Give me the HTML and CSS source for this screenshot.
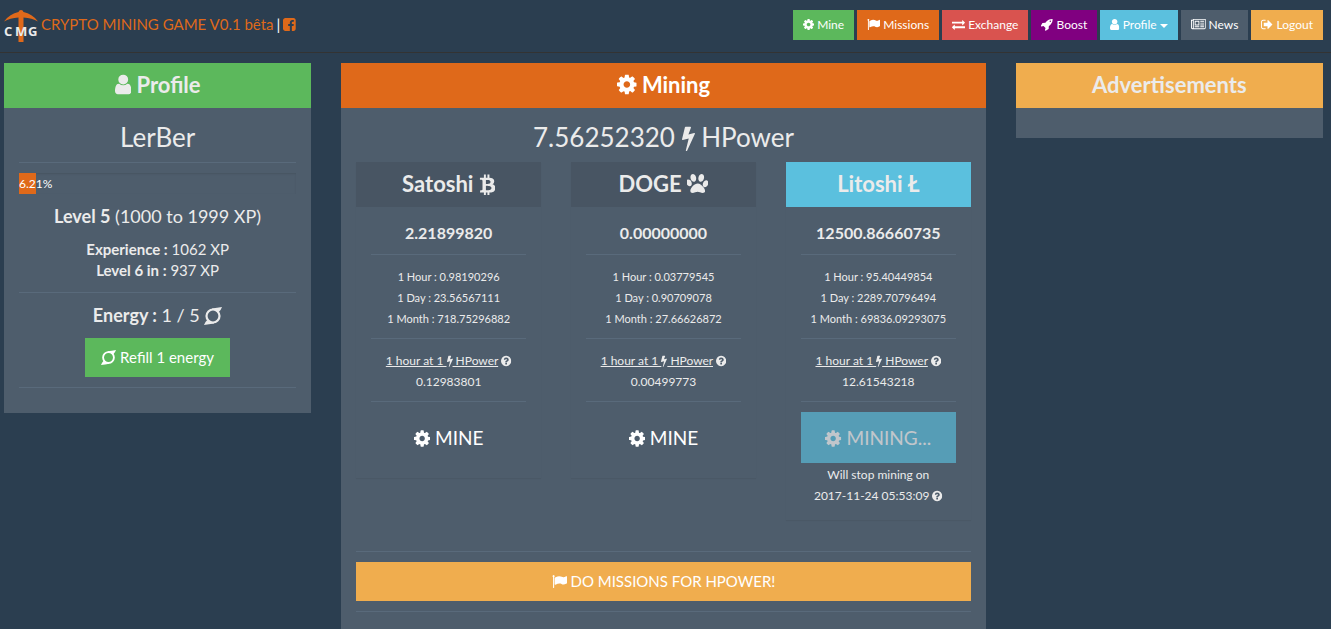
FILE: index.html
```html
<!DOCTYPE html>
<html lang="en">
<head>
<meta charset="utf-8">
<meta name="viewport" content="width=device-width, initial-scale=1">
<title>Crypto Mining Game</title>
<link rel="stylesheet" href="styles.css">
</head>
<body>
<svg class="sprite" aria-hidden="true">
  <symbol id="cog" viewBox="128 0 1536 1792"><path d="M1152 896q0-106-75-181t-181-75-181 75-75 181 75 181 181 75 181-75 75-181zm512-109v222q0 12-8 23t-20 13l-185 28q-19 54-39 91 35 50 107 138 10 12 10 25t-9 23q-27 37-99 108t-94 71q-12 0-26-9l-138-108q-44 23-91 38-16 136-29 186-7 28-36 28h-222q-14 0-24.5-8.5t-11.5-21.5l-28-184q-49-16-90-37l-141 107q-10 9-25 9-14 0-25-11-126-114-165-168-7-10-7-23 0-12 8-23 15-21 51-66.5t54-70.5q-27-50-41-99l-183-27q-13-2-21-12.5t-8-23.5v-222q0-12 8-23t19-13l186-28q14-46 39-92-40-57-107-138-10-12-10-24 0-10 9-23 26-36 98.5-107.5t94.5-71.5q13 0 26 10l138 107q44-23 91-38 16-136 29-186 7-28 36-28h222q14 0 24.5 8.5t11.5 21.5l28 184q49 16 90 37l142-107q9-9 24-9 13 0 25 10 129 119 165 170 7 8 7 22 0 12-8 23-15 21-51 66.5t-54 70.5q26 50 41 98l183 28q13 2 21 12.5t8 23.5z"/></symbol>
  <symbol id="flag" viewBox="0 0 1792 1792"><path d="M320 256q0 72-64 110v1266q0 13-9.500 22.500t-22.500 9.500h-64q-13 0-22.500-9.500t-9.500-22.500v-1266q-64-38-64-110 0-53 37.500-90.500t90.500-37.500 90.500 37.500 37.500 90.500zm1472 64v763q0 25-12.500 38.500t-39.500 27.500q-215 116-369 116-61 0-123.500-22t-108.500-48-115.500-48-142.500-22q-192 0-464 146-17 9-33 9-26 0-45-19t-19-45v-742q0-32 31-55 21-14 79-43 236-120 421-120 107 0 200 29t219 88q38 19 88 19 54 0 117.500-21t110-47 88-47 54.500-21q26 0 45 19t19 45z"/></symbol>
  <symbol id="exchange" viewBox="0 0 1792 1792"><path d="M1792 1184v192q0 13-9.500 22.500t-22.500 9.500h-1376v192q0 13-9.500 22.500t-22.500 9.500q-12 0-24-10l-319-320q-9-9-9-22 0-14 9-23l320-320q9-9 23-9 13 0 22.500 9.500t9.500 22.500v192h1376q13 0 22.500 9.500t9.500 22.500zm0-544q0 14-9 23l-320 320q-9 9-23 9-13 0-22.500-9.500t-9.500-22.500v-192h-1376q-13 0-22.500-9.500t-9.500-22.500v-192q0-13 9.500-22.500t22.500-9.500h1376v-192q0-14 9-23t23-9q12 0 24 10l319 319q9 9 9 23z"/></symbol>
  <symbol id="rocket" viewBox="64 0 1664 1792"><path d="M1440 448q0-40-28-68t-68-28-68 28-28 68 28 68 68 28 68-28 28-68zm224-288q0 249-75.500 430.500t-253.500 360.500q-81 80-195 176l-20 379q-2 16-16 26l-384 224q-7 4-16 4-12 0-23-9l-64-64q-13-14-8-32l85-276-281-281-276 85q-3 1-9 1-14 0-23-9l-64-64q-17-19-5-39l224-384q10-14 26-16l379-20q96-114 176-195 188-187 358-258t431-71q14 0 24 9.500t10 22.500z"/></symbol>
  <symbol id="user" viewBox="256 0 1280 1792"><path d="M1536 1399q0 109-62.500 187t-150.500 78h-854q-88 0-150.500-78t-62.500-187q0-85 8.500-160.500t31.500-152 58.500-131 94-89 134.500-34.500q131 128 313 128t313-128q76 0 134.500 34.500t94 89 58.500 131 31.500 152 8.500 160.500zm-256-887q0 159-112.500 271.500t-271.500 112.500-271.500-112.500-112.500-271.500 112.500-271.500 271.500-112.500 271.500 112.500 112.500 271.500z"/></symbol>
  <symbol id="news" viewBox="0 0 2048 1792"><path d="M1024 512h-384v384h384v-384zm128 640v128h-640v-128h640zm0-768v640h-640v-640h640zm640 768v128h-512v-128h512zm0-256v128h-512v-128h512zm0-256v128h-512v-128h512zm0-256v128h-512v-128h512zm-1536 960v-960h-128v960q0 26 19 45t45 19 45-19 19-45zm1664 0v-1088h-1536v1088q0 33-11 64h1483q26 0 45-19t19-45zm128-1216v1216q0 80-56 136t-136 56h-1664q-80 0-136-56t-56-136v-1088h256v-128h1792z"/></symbol>
  <symbol id="signout" viewBox="64 0 1664 1792"><path d="M704 1440q0 4 1 20t.5 26.500-3 23.500-10 19.500-20.500 6.500h-320q-119 0-203.500-84.500t-84.500-203.500v-704q0-119 84.500-203.500t203.500-84.500h320q13 0 22.500 9.500t9.500 22.500q0 4 1 20t.5 26.500-3 23.500-10 19.500-20.500 6.500h-320q-66 0-113 47t-47 113v704q0 66 47 113t113 47h312l11.500 1 11.500 3 8 5.500 7 9 2 13.500zm928-544q0 26-19 45l-544 544q-19 19-45 19t-45-19-19-45v-288h-448q-26 0-45-19t-19-45v-384q0-26 19-45t45-19h448v-288q0-26 19-45t45-19 45 19l544 544q19 19 19 45z"/></symbol>
  <symbol id="bolt" viewBox="448 0 896 1792"><path d="M1333 566q18 20 7 44l-540 1157q-13 25-42 25-4 0-14-2-17-5-25.500-19t-4.500-30l197-808-406 101q-4 1-12 1-18 0-31-11-18-15-13-39l201-825q4-14 16-23t28-9h328q19 0 32 12.500t13 29.500q0 8-5 18l-171 463 396-98q8-2 12-2 19 0 34 15z"/></symbol>
  <symbol id="btc" viewBox="256 0 1280 1792"><path d="M1440 706q18 182-131 258 117 28 175 103t45 214q-7 71-32.500 125t-64.500 89-97 58.500-121.500 34.500-145.500 15v255h-154v-251q-80 0-122-1v252h-154v-255q-18 0-54-.5t-55-.5h-200l31-183h111q50 0 58-51v-402h16q-6-1-16-1v-287q-13-68-89-68h-111v-164l212 1q64 0 97-1v-252h154v247q82-2 122-2v-245h154v252q79 7 140 22.500t113 45 82.500 78 36.500 114.500zm-215 545q0-36-15-64t-37-46-57.500-30.500-65.500-18.500-74-9-69-3-64.500 1-47.500 1v338q8 0 37 .5t48 .5 53-1.500 58.500-4 57-8.500 55.500-14 47.500-21 39.500-30 24.500-40 9.500-51zm-71-476q0-33-12.500-58.500t-30.500-42-48-28-55-16.500-61.500-8-58-2.500-54 1-39.500.5v307q5 0 34.500.5t46.500 0 50-2 55-5.500 51.500-11 48.500-18.500 37-27 27-38.500 9-51z"/></symbol>
  <symbol id="paw" viewBox="64 0 1664 1792"><path d="M780 508q0 60-19 113.500t-63 92.500-105 39q-76 0-138-57.500t-92-135.500-30-151q0-60 19-113.500t63-92.500 105-39q77 0 138.500 57.500t91.500 135 30 151.500zm-342 411q0 80-42 139t-119 59q-76 0-141.500-55.500t-100.500-133.500-35-152q0-80 42-139.500t119-59.500q76 0 141.500 55.500t100.500 134 35 152.500zm458-27q118 0 255 97.500t229 237 92 254.500q0 46-17 76.500t-48.500 45-64.500 20-76 5.500q-68 0-187.500-45t-182.500-45q-66 0-192.500 44.500t-200.500 44.500q-183 0-183-146 0-86 56-191.500t139.500-192.500 187.500-146 193-59zm239-139q-61 0-105-39t-63-92.500-19-113.500q0-74 30-151.500t91.500-135 138.500-57.500q61 0 105 39t63 92.500 19 113.500q0 73-30 151t-92 135.500-138 57.500zm432-104q77 0 119 59.500t42 139.500q0 74-35 152t-100.500 133.500-141.500 55.500q-77 0-119-59t-42-139q0-74 35-152.500t100.500-134 141.500-55.500z"/></symbol>
  <symbol id="help" viewBox="128 0 1536 1792"><path d="M1024 1376v-192q0-14-9-23t-23-9h-192q-14 0-23 9t-9 23v192q0 14 9 23t23 9h192q14 0 23-9t9-23zm256-672q0-88-55.500-163t-138.500-116-170-41q-243 0-371 213-15 24 8 42l132 100q7 6 19 6 16 0 25-12 53-68 86-92 34-24 86-24 48 0 85.500 26t37.500 59q0 38-20 61t-68 45q-63 28-115.500 86.500t-52.500 125.500v36q0 14 9 23t23 9h192q14 0 23-9t9-23q0-19 21.500-49.500t54.500-49.500q32-18 49-28.500t46-35 44.500-48 28-60.500 12.500-81zm384 192q0 209-103 385.500t-279.500 279.500-385.500 103-385.500-103-279.500-279.500-103-385.500 103-385.500 279.500-279.500 385.500-103 385.500 103 279.500 279.500 103 385.500z"/></symbol>
  <symbol id="facebook" viewBox="128 0 1536 1792"><path d="M1376 128q119 0 203.500 84.500t84.500 203.500v960q0 119-84.500 203.500t-203.500 84.500h-188v-595h199l30-232h-229v-148q0-56 23.500-84t91.500-28l122-1v-207q-63-9-178-9-136 0-217.500 80t-81.500 226v171h-200v232h200v595h-532q-119 0-203.500-84.500t-84.500-203.500v-960q0-119 84.500-203.500t203.500-84.500h960z"/></symbol>
  <symbol id="energy" viewBox="0 0 18 18"><circle cx="9" cy="9" r="6.500" fill="none" stroke="currentColor" stroke-width="2.200"/><path d="M8 1.600Q13 .8 18 0Q17 3 14.800 5Q12.500 2.600 8 2.800zM10 16.400Q5 17.200 0 18Q1 15 3.200 13Q5.500 15.400 10 15.200z"/></symbol>
</svg>

<header class="navbar">
  <div class="brand">
    <a class="brand-link" href="#">
      <svg class="logo" viewBox="0 0 34 32" role="img" aria-label="CMG">
        <path class="logo-pick" d="M14.500 2Q15 0 17 0t2.500 2q8.500 1.500 14.500 9.500Q28 8 19.500 7.500V32h-5V7.500Q6 8 0 11.500 6 3.500 14.500 2z"/>
        <text class="logo-text" y="26"><tspan x="0">C</tspan><tspan x="11">M</tspan><tspan x="24">G</tspan></text>
      </svg>
      <span>CRYPTO MINING GAME V0.1 bêta</span>
    </a>
    <span class="divider">|</span>
    <a class="brand-link" href="#" aria-label="Facebook"><span><svg class="icon w-cog"><use href="#facebook"/></svg></span></a>
  </div>
  <nav class="menu">
    <a class="btn small success" href="#"><svg class="icon w-cog"><use href="#cog"/></svg> Mine</a>
    <a class="btn small primary" href="#"><svg class="icon w-full"><use href="#flag"/></svg> Missions</a>
    <a class="btn small danger" href="#"><svg class="icon w-full"><use href="#exchange"/></svg> Exchange</a>
    <a class="btn small boost" href="#"><svg class="icon w-wide"><use href="#rocket"/></svg> Boost</a>
    <button class="btn small info" type="button" aria-haspopup="true"><svg class="icon w-user"><use href="#user"/></svg> Profile <span class="caret"></span></button>
    <a class="btn small plain" href="#"><svg class="icon w-news"><use href="#news"/></svg> News</a>
    <a class="btn small warning" href="#"><svg class="icon w-wide"><use href="#signout"/></svg> Logout</a>
  </nav>
</header>

<main class="page">
  <section class="panel">
    <h2 class="panel-title success"><svg class="icon w-user"><use href="#user"/></svg> Profile</h2>
    <div class="panel-body">
      <h3 class="headline">LerBer</h3>
      <hr>
      <div class="progress" role="progressbar" aria-label="Experience" aria-valuenow="6.21" aria-valuemin="0" aria-valuemax="100">
        <div class="progress-bar" style="width: 6.21%">6.21%</div>
      </div>
      <h4 class="subhead"><strong>Level 5</strong> (1000 to 1999 XP)</h4>
      <p class="facts"><strong>Experience :</strong> 1062 XP<br><strong>Level 6 in :</strong> 937 XP</p>
      <hr>
      <h4 class="subhead"><strong>Energy :</strong> 1 / 5 <svg class="icon w-full"><use href="#energy"/></svg></h4>
      <button class="btn success" type="button"><svg class="icon w-full"><use href="#energy"/></svg> Refill 1 energy</button>
      <hr>
    </div>
  </section>

  <section class="panel center">
    <h2 class="panel-title primary"><svg class="icon w-cog"><use href="#cog"/></svg> Mining</h2>
    <div class="panel-body">
      <h3 class="headline">7.56252320 <svg class="icon w-bolt"><use href="#bolt"/></svg> HPower</h3>
      <div class="coins">
        <section class="panel coin">
          <h2 class="panel-title muted">Satoshi <svg class="icon w-user"><use href="#btc"/></svg></h2>
          <div class="panel-body">
            <div class="balance">2.21899820</div>
            <hr>
            <p class="rates compact">1 Hour : 0.98190296<br>1 Day : 23.56567111<br>1 Month : 718.75296882</p>
            <hr>
            <p class="rates"><u>1 hour at 1 <svg class="icon w-bolt"><use href="#bolt"/></svg> HPower</u> <svg class="icon w-cog"><use href="#help"/></svg><br>0.12983801</p>
            <hr>
            <button class="btn large plain" type="button"><svg class="icon w-cog"><use href="#cog"/></svg> MINE</button>
          </div>
        </section>
        <section class="panel coin">
          <h2 class="panel-title muted">DOGE <svg class="icon w-wide"><use href="#paw"/></svg></h2>
          <div class="panel-body">
            <div class="balance">0.00000000</div>
            <hr>
            <p class="rates compact">1 Hour : 0.03779545<br>1 Day : 0.90709078<br>1 Month : 27.66626872</p>
            <hr>
            <p class="rates"><u>1 hour at 1 <svg class="icon w-bolt"><use href="#bolt"/></svg> HPower</u> <svg class="icon w-cog"><use href="#help"/></svg><br>0.00499773</p>
            <hr>
            <button class="btn large plain" type="button"><svg class="icon w-cog"><use href="#cog"/></svg> MINE</button>
          </div>
        </section>
        <section class="panel coin">
          <h2 class="panel-title info">Litoshi Ł</h2>
          <div class="panel-body">
            <div class="balance">12500.86660735</div>
            <hr>
            <p class="rates compact">1 Hour : 95.40449854<br>1 Day : 2289.70796494<br>1 Month : 69836.09293075</p>
            <hr>
            <p class="rates"><u>1 hour at 1 <svg class="icon w-bolt"><use href="#bolt"/></svg> HPower</u> <svg class="icon w-cog"><use href="#help"/></svg><br>12.61543218</p>
            <hr>
            <button class="btn large info" type="button" disabled><svg class="icon w-cog"><use href="#cog"/></svg> MINING...</button>
            <p class="rates">Will stop mining on<br>2017-11-24 05:53:09 <svg class="icon w-cog"><use href="#help"/></svg></p>
          </div>
        </section>
      </div>
      <hr>
      <a class="btn block warning" href="#"><svg class="icon w-full"><use href="#flag"/></svg> DO MISSIONS FOR HPOWER!</a>
      <hr>
    </div>
  </section>

  <section class="panel">
    <h2 class="panel-title warning">Advertisements</h2>
    <div class="panel-body"></div>
  </section>
</main>
</body>
</html>
```
FILE: styles.css
```css
* { box-sizing: border-box; }

body {
  margin: 0;
  background: #2b3e50;
  color: #ebebeb;
  font: 15px/21px Lato, "Liberation Sans", sans-serif;
}

.sprite { display: none; }

.icon {
  height: 1em;
  fill: currentColor;
  vertical-align: -0.14em;
}
.w-bolt { width: 0.5em; }
.w-user { width: 0.714em; }
.w-cog { width: 0.857em; }
.w-wide { width: 0.929em; }
.w-full { width: 1em; }
.w-news { width: 1.143em; }

/* Top bar */
.navbar {
  display: flex;
  justify-content: space-between;
  align-items: flex-start;
  padding: 10px 8px 10px 4px;
  border-bottom: 1px solid #333;
}
.brand {
  display: flex;
  align-items: flex-start;
  gap: 3px;
  line-height: 28px;
}
.brand-link {
  display: flex;
  align-items: flex-start;
  gap: 3px;
  color: #df691a;
  text-decoration: none;
}
.divider { color: #fff; }
.logo {
  width: 34px;
  height: 32px;
}
.logo-pick { fill: #df691a; }
.logo-text {
  fill: #ebebeb;
  font: bold 13px "Open Sans", sans-serif;
}
.menu {
  display: flex;
  gap: 3px;
}

/* Buttons */
.btn {
  display: inline-block;
  border: 0;
  padding: 9px 16px;
  color: #fff;
  font: inherit;
  text-align: center;
  text-decoration: none;
  white-space: nowrap;
  cursor: pointer;
}
.btn.small {
  padding: 6px 10px;
  font-size: 12px;
  line-height: 18px;
}
.btn.small .icon { font-size: 13px; }
.btn.large {
  display: block;
  width: 100%;
  padding: 12px 0;
  font-size: 19px;
  line-height: 27px;
}
.btn.block { display: block; }
.btn:disabled {
  opacity: 0.65;
  cursor: not-allowed;
}
.caret {
  display: inline-block;
  border-top: 4px solid;
  border-left: 4px solid transparent;
  border-right: 4px solid transparent;
  vertical-align: middle;
}

.success { background: #5cb85c; }
.primary { background: #df691a; }
.danger { background: #d9534f; }
.boost { background: #800080; }
.info { background: #5bc0de; }
.plain { background: #4e5d6c; }
.warning { background: #f0ad4e; }
.muted { background: #485563; }

/* Panels */
.page {
  display: grid;
  grid-template-columns: repeat(4, 1fr);
  align-items: start;
  gap: 30px;
  padding: 10px 8px 0 4px;
}
.center { grid-column: span 2; }
.panel {
  background: #4e5d6c;
  text-align: center;
}
.panel-title {
  margin: 0;
  padding: 9px 15px 11px;
  font-size: 22px;
  line-height: 25px;
  font-weight: 700;
}
.panel-title .icon { font-size: 23px; }
.panel-title.primary { color: #fff; }
.panel-body { padding: 15px; }

hr {
  margin: 10px 0;
  border: 0;
  border-top: 1px solid #596a7b;
}
.headline {
  margin: 0 0 10px;
  font-size: 26px;
  line-height: 29px;
  font-weight: 400;
}
.subhead {
  margin: 11px 0;
  font-size: 18px;
  line-height: 23px;
  font-weight: 400;
}
.facts { margin: 0 0 11px; }

.progress {
  height: 21px;
  box-shadow: inset 0 1px 2px rgba(0, 0, 0, 0.1);
}
.progress-bar {
  height: 100%;
  background: #df691a;
  color: #fff;
  font-size: 12px;
}

/* Coins */
.coins {
  display: grid;
  grid-template-columns: repeat(3, 1fr);
  align-items: start;
  gap: 30px;
  margin-bottom: 31px;
}
.coin { box-shadow: 0 1px 1px rgba(0, 0, 0, 0.05); }
.balance {
  font-size: 16px;
  line-height: 22px;
  font-weight: 700;
}
.rates {
  margin: 0 0 -1px;
  padding-top: 1px;
  font-size: 12px;
}
.rates.compact { font-size: 11px; }
```
